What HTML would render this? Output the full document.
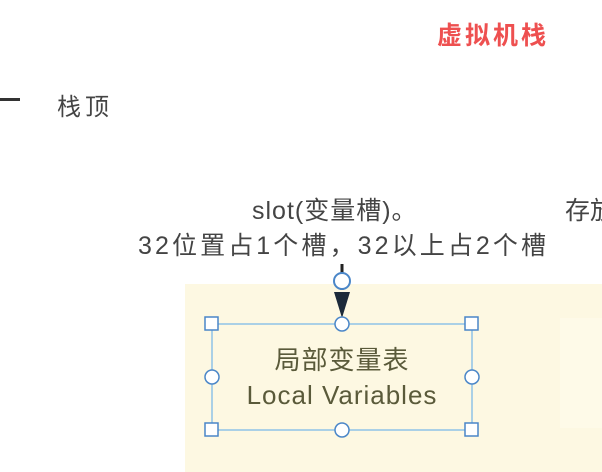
<!DOCTYPE html>
<html><head><meta charset="utf-8"><style>
body{margin:0;width:602px;height:472px;background:#fff;position:relative;overflow:hidden;font-family:"Liberation Sans","Noto Sans CJK SC",sans-serif;}
.t{position:absolute;white-space:nowrap;color:#444;}
</style></head><body>
<div style="position:absolute;left:185px;top:284px;width:417px;height:188px;background:#fdf8e2"></div>
<div style="position:absolute;left:560px;top:318px;width:42px;height:110px;background:#fefae8"></div>
<div class="t" style="left:437px;top:16px;font-size:25px;letter-spacing:3px;font-weight:bold;color:#ee5050">虚拟机栈</div>
<div style="position:absolute;left:0;top:98px;width:20px;height:3px;background:#333"></div>
<div class="t" style="left:57px;top:87px;font-size:24px;letter-spacing:4px;color:#444">栈顶</div>
<div class="t" style="left:252px;top:191px;font-size:25px;letter-spacing:1px">slot(变量槽)。</div>
<div class="t" style="left:138px;top:226px;font-size:25px;letter-spacing:3.1px">32位置占1个槽，32以上占2个槽</div>
<div class="t" style="left:565px;top:191px;font-size:25px">存放</div>
<div class="t" style="left:212px;top:343px;width:260px;text-align:center;font-size:26px;letter-spacing:1px;line-height:35px;color:#5a5a3a">局部变量表<br>Local Variables</div>
<svg width="602" height="472" style="position:absolute;left:0;top:0">
<line x1="342" y1="264" x2="342" y2="290" stroke="#222" stroke-width="3"/>
<polygon points="334,292 350,292 342,318" fill="#1c2a3a"/>
<circle cx="342" cy="281" r="8" fill="#fff" stroke="#4a86c8" stroke-width="2"/>
<rect x="212" y="324" width="260" height="106" fill="none" stroke="#8ec3e8" stroke-width="1.5"/>
<g fill="#fff" stroke="#4a86c8" stroke-width="1.5">
<rect x="205" y="317" width="13" height="13"/><rect x="465" y="317" width="13" height="13"/>
<rect x="205" y="423" width="13" height="13"/><rect x="465" y="423" width="13" height="13"/>
<circle cx="342" cy="324" r="7"/><circle cx="342" cy="430" r="7"/>
<circle cx="212" cy="377" r="7"/><circle cx="472" cy="377" r="7"/>
</g>
</svg>
</body></html>
